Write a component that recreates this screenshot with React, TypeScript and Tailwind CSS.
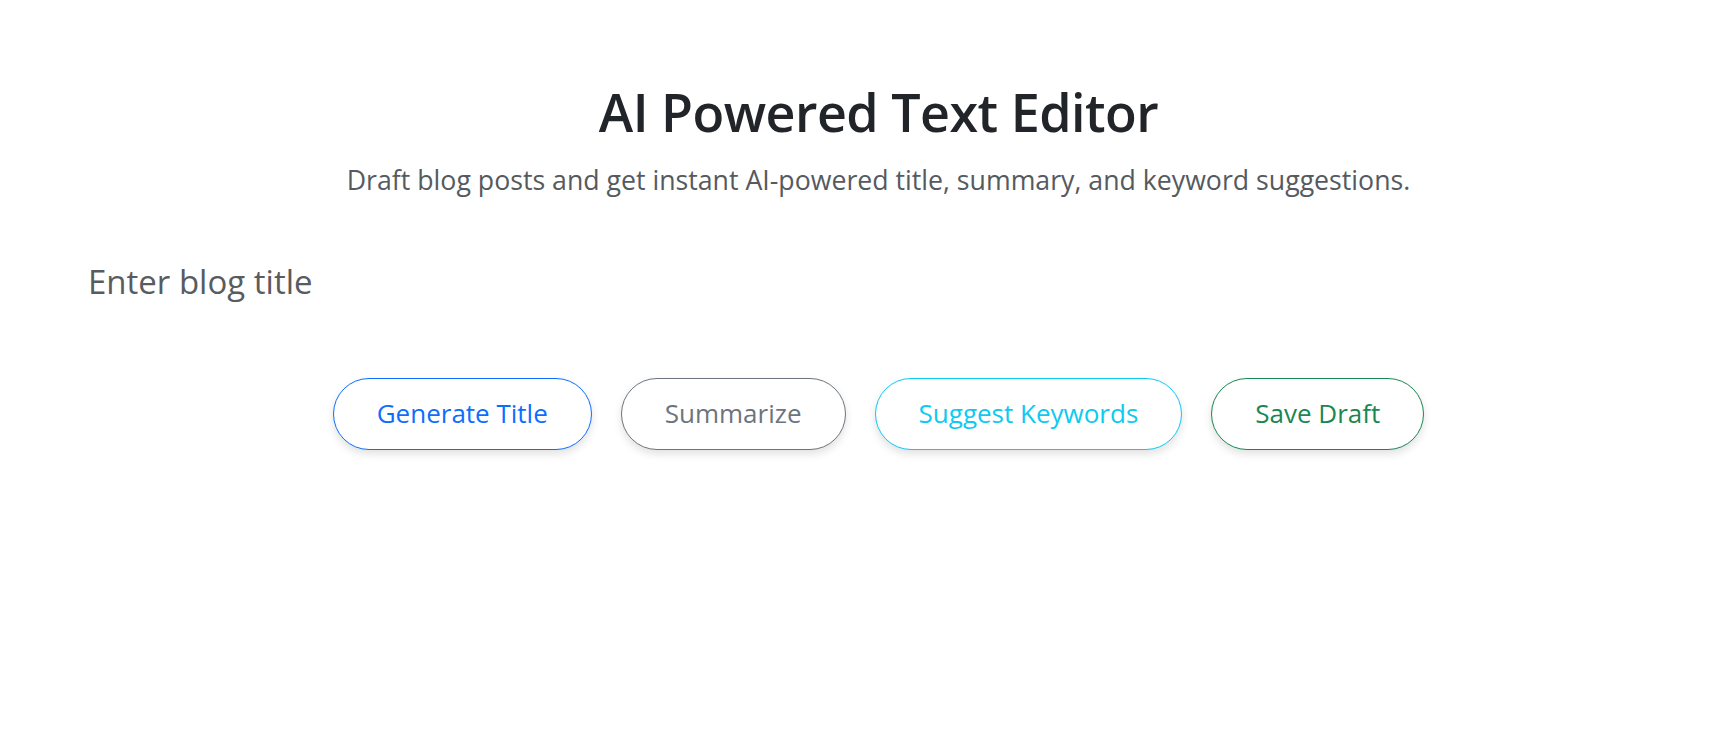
import React from 'react';

const buttons = [
  { label: 'Generate Title', cls: 'border-[#0d6efd] text-[#0d6efd]' },
  { label: 'Summarize', cls: 'border-[#6c757d] text-[#6c757d]' },
  { label: 'Suggest Keywords', cls: 'border-[#0dcaf0] text-[#0dcaf0]' },
  { label: 'Save Draft', cls: 'border-[#198754] text-[#198754]' },
];

const App = () => {
  return (
    <div className="min-h-screen bg-white pl-[30px] font-['Open_Sans',sans-serif]">
      <div className="px-[42px] pt-[81px]">
        <h1 className="text-center text-[52px] leading-[1.2] font-semibold tracking-[-0.01em] text-[#212529]">
          AI Powered Text Editor
        </h1>
        <p className="mt-[17px] text-center text-[26.7px] leading-[1.5] text-[#555a5f]">
          Draft blog posts and get instant AI-powered title, summary, and keyword suggestions.
        </p>

        <input
          type="text"
          placeholder="Enter blog title"
          className="mt-[49px] w-full border-0 bg-transparent px-4 py-2 text-[33px] leading-[1.5] text-[#212529] outline-none placeholder:text-[#595c5f]"
        />

        <div className="mt-[63px] flex justify-center gap-[29px]">
          {buttons.map((b) => (
            <button
              key={b.label}
              className={`h-[72px] rounded-full border bg-white px-[43px] text-[26px] shadow-[0_4px_8px_rgba(0,0,0,0.12)] ${b.cls}`}
            >
              {b.label}
            </button>
          ))}
        </div>
      </div>
    </div>
  );
};

export default App;
